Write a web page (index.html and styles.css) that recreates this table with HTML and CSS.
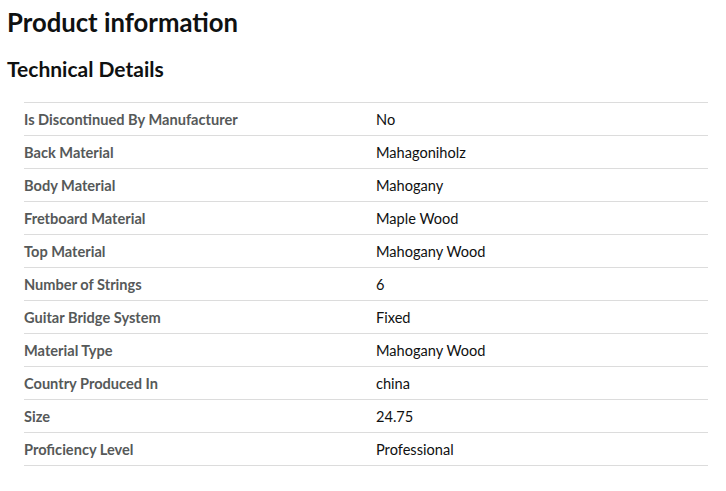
FILE: index.html
```html
<!DOCTYPE html>
<html>
<head>
<meta charset="utf-8">
<link rel="stylesheet" href="styles.css">
</head>
<body>
<main class="page">
  <h1 class="title">Product information</h1>
  <h2 class="subtitle">Technical Details</h2>
  <table class="details">
    <tbody>
      <tr><th>Is Discontinued By Manufacturer</th><td>No</td></tr>
      <tr><th>Back Material</th><td>Mahagoniholz</td></tr>
      <tr><th>Body Material</th><td>Mahogany</td></tr>
      <tr><th>Fretboard Material</th><td>Maple Wood</td></tr>
      <tr><th>Top Material</th><td>Mahogany Wood</td></tr>
      <tr><th>Number of Strings</th><td>6</td></tr>
      <tr><th>Guitar Bridge System</th><td>Fixed</td></tr>
      <tr><th>Material Type</th><td>Mahogany Wood</td></tr>
      <tr><th>Country Produced In</th><td>china</td></tr>
      <tr><th>Size</th><td>24.75</td></tr>
      <tr><th>Proficiency Level</th><td>Professional</td></tr>
    </tbody>
  </table>
</main>
</body>
</html>
```
FILE: styles.css
```css
html, body {
  margin: 0;
  padding: 0;
  background: #fff;
}
.page {
  padding: 6px 7px 0 7px;
  font-family: Lato, "Liberation Sans", sans-serif;
  color: #0f1111;
}
.title {
  margin: 0;
  font-size: 25.7px;
  line-height: 32px;
  font-weight: 700;
}
.subtitle {
  margin: 19px 0 0 0;
  font-size: 21px;
  line-height: 24px;
  font-weight: 700;
}
.details {
  margin: 21px 0 0 17px;
  width: 684px;
  border-collapse: collapse;
  font-size: 14.6px;
}
.details tr {
  border-top: 1px solid #dcdcdc;
  border-bottom: 1px solid #dcdcdc;
}
.details th {
  width: 352px;
  text-align: left;
  font-weight: 700;
  color: #565959;
  padding: 0;
  height: 32px;
}
.details td {
  padding: 0;
  color: #0f1111;
}
```
